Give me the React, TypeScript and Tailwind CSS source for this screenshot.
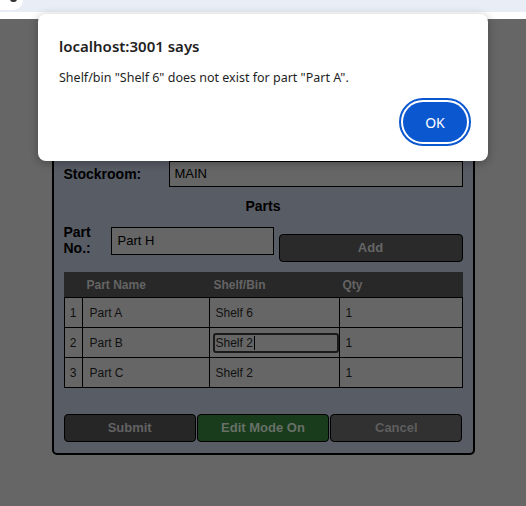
import { useState } from 'react';

interface PartRow {
  id: number;
  name: string;
  shelf: string;
  qty: number;
}

const ROWS: PartRow[] = [
  { id: 1, name: 'Part A', shelf: 'Shelf 6', qty: 1 },
  { id: 2, name: 'Part B', shelf: 'Shelf 2', qty: 1 },
  { id: 3, name: 'Part C', shelf: 'Shelf 2', qty: 1 },
];

const App = () => {
  const [partNo] = useState('Part H');
  const [editingRow] = useState(2);

  const inputClass = 'border border-black bg-[#666666] text-[13px] text-black';
  const buttonClass =
    'h-[28px] flex-1 rounded-[4px] border border-black text-[13px] font-bold flex items-center justify-center';

  return (
    <div className="relative min-h-[506px] overflow-hidden bg-[#666666] font-['Liberation_Sans',Arial,sans-serif]">
      {/* browser chrome strip */}
      <div className="relative h-[12px] bg-[#e9eef6]">
        <div className="absolute left-0 top-0 h-[10px] w-[23px] rounded-br-[12px] bg-white">
          <div className="absolute left-[10px] top-[-4px] h-[6px] w-[7px] rounded-full bg-[#333]" />
        </div>
      </div>
      <div className="h-[7px] bg-white" />

      {/* page */}
      <div className="pt-[79px]">
        <div className="mx-auto w-[423px] rounded-[5px] border-2 border-black bg-[#585c65] px-[10px] pb-[11px] pt-[10px]">
          <h2 className="h-[24px] text-center text-[18px] font-bold leading-[24px] text-black">Receive Parts</h2>

          {/* Stockroom */}
          <div className="mt-[27px] flex items-center">
            <label className="w-[105px] text-[14px] font-bold text-black">Stockroom:</label>
            <div className={`${inputClass} flex h-[26px] flex-1 items-center px-[5px]`}>MAIN</div>
          </div>

          <p className="mt-[11px] text-center text-[14px] font-bold leading-[16px] text-black">Parts</p>

          {/* Part No. + Add */}
          <div className="mt-[10px] flex items-start">
            <label className="w-[47px] text-[14px] font-bold leading-[16px] text-black">
              Part
              <br />
              No.:
            </label>
            <div className={`${inputClass} mt-[3px] flex h-[28px] w-[163px] items-center px-[6px]`}>{partNo}</div>
            <button className={`${buttonClass} ml-[5px] mt-[10px] bg-[#2a2a2a] text-[#666666]`}>Add</button>
          </div>

          {/* Parts table */}
          <div className="mt-[10px] text-[12px]">
            <div className="grid h-[25px] grid-cols-[18px_127px_130px_1fr] items-center bg-[#282828] font-bold text-[#646464]">
              <div />
              <div className="pl-[5px]">Part Name</div>
              <div className="pl-[5px]">Shelf/Bin</div>
              <div className="pl-[4px]">Qty</div>
            </div>
            <div className="border-b border-black">
              {ROWS.map((row) => (
                <div
                  key={row.id}
                  className="grid h-[30px] grid-cols-[17px_127px_130px_1fr] border-x border-t border-black bg-[#666666] text-[#111]"
                >
                  <div className="flex items-center justify-center">{row.id}</div>
                  <div className="flex items-center border-l border-black pl-[7px]">{row.name}</div>
                  <div className="flex items-center border-l border-black">
                    {row.id === editingRow ? (
                      <div className="ml-[3px] flex h-[20px] flex-1 items-center rounded-[3px] border-2 border-[#1a1a1a] pl-[1px]">
                        {row.shelf}
                        <span className="ml-[1px] h-[14px] w-px bg-black" />
                      </div>
                    ) : (
                      <span className="pl-[6px]">{row.shelf}</span>
                    )}
                  </div>
                  <div className="flex items-center border-l border-black pl-[6px]">{row.qty}</div>
                </div>
              ))}
            </div>
          </div>

          {/* Actions */}
          <div className="mt-[26px] flex gap-[1px]">
            <button className={`${buttonClass} bg-[#262626] text-[#636363]`}>Submit</button>
            <button className={`${buttonClass} bg-[#183c1c] text-[#687068]`}>Edit Mode On</button>
            <button className={`${buttonClass} bg-[#313131] text-[#5e5e5e]`}>Cancel</button>
          </div>
        </div>
      </div>

      {/* alert dialog */}
      <div className="absolute left-[38px] top-[14px] w-[450px] rounded-[8px] bg-white px-[21px] pb-[19px] pt-[22px] font-['Noto_Sans',sans-serif] text-[#1f1f1f] shadow-[0_2px_10px_rgba(0,0,0,0.3)]">
        <p className="text-[15px] font-semibold leading-[20px]">localhost:3001 says</p>
        <p className="mt-[14px] text-[12.5px] leading-[16px]">Shelf/bin "Shelf 6" does not exist for part "Part A".</p>
        <div className="mt-[16px] flex justify-end">
          <button className="h-[40px] w-[64px] rounded-full bg-[#0b57d0] text-[14px] text-white outline-2 outline-offset-2 outline-[#0b57d0]">
            OK
          </button>
        </div>
      </div>
    </div>
  );
};

export default App;
